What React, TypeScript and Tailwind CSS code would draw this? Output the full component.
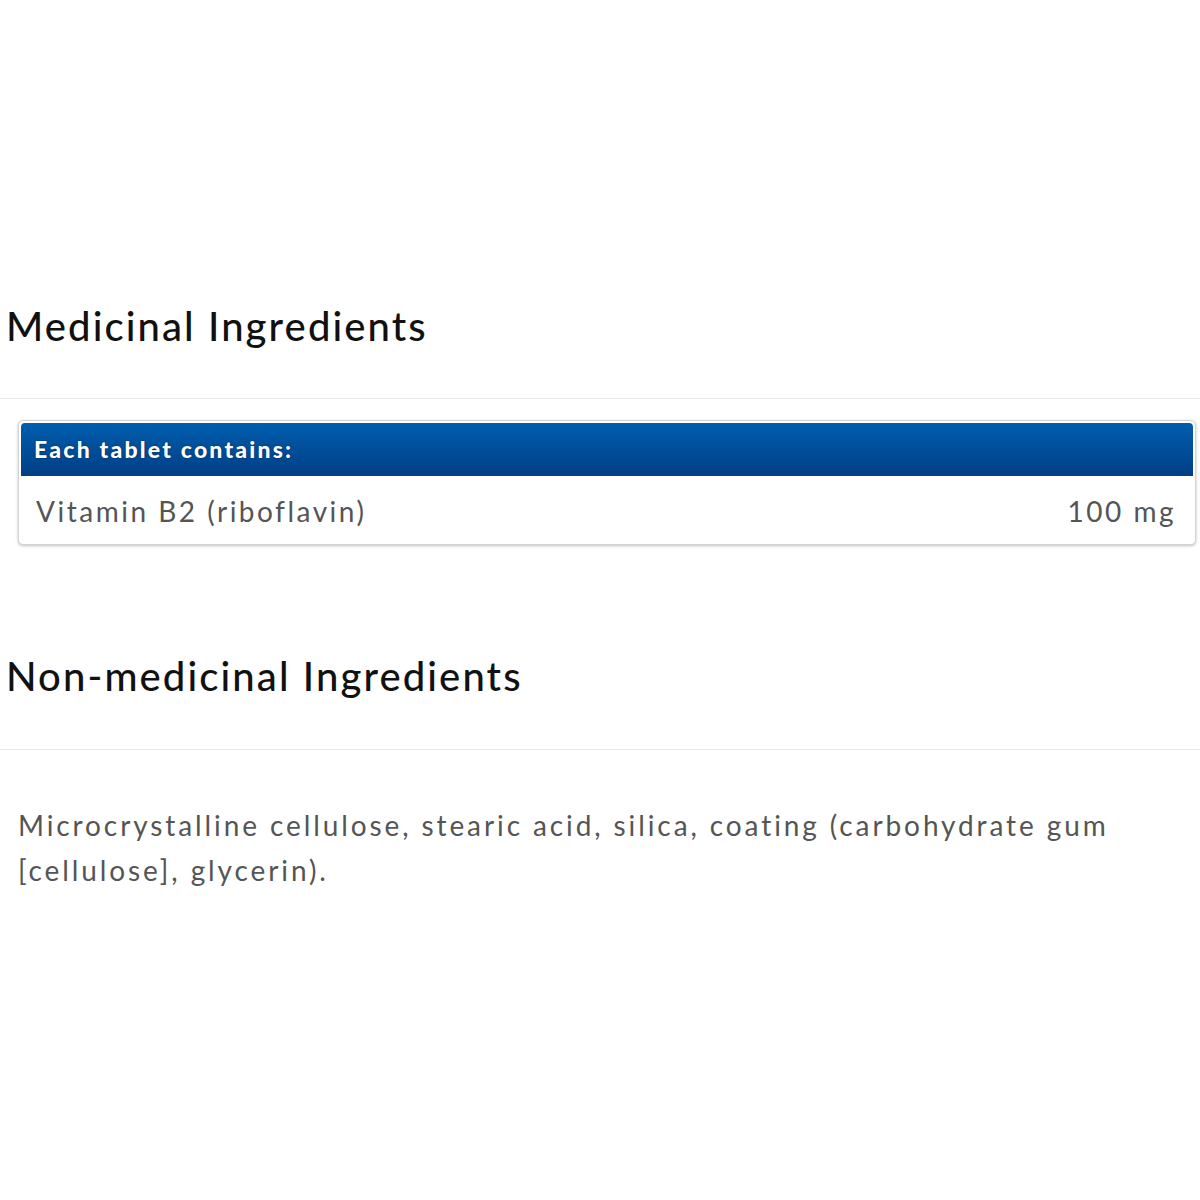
export default function App() {
  return (
    <div className="w-[1200px] h-[1200px] bg-white" style={{ fontFamily: 'Lato, "Noto Sans", sans-serif' }}>
      <div className="h-[298px]" />
      <div className="pl-[6px] h-[100px]">
        <h2 className="text-[40px] leading-[56px] font-medium text-[#111] tracking-[2.1px]">Medicinal Ingredients</h2>
      </div>
      <div className="h-px bg-[#e6e6e6]" />
      <div className="pt-[21px] pl-[18px] pr-[4px]">
        <div className="rounded-[5px] border border-[#d4d4d4] shadow-[0_1px_3px_rgba(0,0,0,0.25)] p-[2px] bg-white">
          <div className="h-[53px] rounded-t-[4px] bg-gradient-to-b from-[#005eae] to-[#003f86] flex items-center pl-[13px]">
            <span className="text-white text-[23px] font-black tracking-[2.2px]" style={{ textShadow: '0 0 2px #002050' }}>Each tablet contains:</span>
          </div>
          <div className="h-[66px] flex items-center justify-between pl-[15px] pr-[17px] pt-[3px] text-[28px] text-[#555] tracking-[2.5px]">
            <span>Vitamin B2 (riboflavin)</span>
            <span>100 mg</span>
          </div>
        </div>
      </div>
      <div className="h-[103px]" />
      <div className="pl-[6px] h-[101px]">
        <h2 className="text-[40px] leading-[56px] font-medium text-[#111] tracking-[2.1px]">Non-medicinal Ingredients</h2>
      </div>
      <div className="h-px bg-[#e6e6e6]" />
      <div className="pt-[53px] pl-[18px] pr-[40px]">
        <p className="text-[28px] leading-[45px] text-[#555] tracking-[2.9px]">
          Microcrystalline cellulose, stearic acid, silica, coating (carbohydrate gum [cellulose], glycerin).
        </p>
      </div>
    </div>
  );
}
